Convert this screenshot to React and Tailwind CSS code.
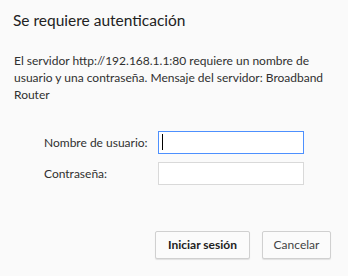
export default function App() {
  return (
    <div className="w-[348px] h-[276px] bg-[#fafafa] text-[#303030] flex flex-col" style={{ fontFamily: 'Lato, sans-serif' }}>
      <div className="pl-[13px] pt-[10px] text-[15.5px] leading-[20px] text-[#222]">Se requiere autenticación</div>
      <div className="pl-[14px] pr-[14px] pt-[22px] text-[12px] leading-[17px]">
        El servidor http://192.168.1.1:80 requiere un nombre de usuario y una contraseña. Mensaje del servidor: Broadband Router
      </div>
      <div className="mt-[28px] flex flex-col gap-[8px]">
        <div className="flex items-center">
          <label className="w-[158px] pl-[44px] text-[12px] whitespace-nowrap">Nombre de usuario:</label>
          <div className="w-[146px] h-[23px] border border-[#4d90fe] bg-white relative">
            <div className="absolute left-[3px] top-[2px] w-px h-[16px] bg-black"></div>
          </div>
        </div>
        <div className="flex items-center">
          <label className="w-[158px] pl-[44px] text-[12px] whitespace-nowrap">Contraseña:</label>
          <div className="w-[146px] h-[23px] border border-[#d9d9d9] bg-white"></div>
        </div>
      </div>
      <div className="mt-auto mb-[17px] pr-[17px] flex justify-end gap-[12px]">
        <button className="w-[95px] h-[28px] border border-[#d0d0d0] rounded-[2px] bg-[#fbfbfb] shadow-[0_1px_1px_rgba(0,0,0,0.1)] text-[12px] font-bold text-[#222]">Iniciar sesión</button>
        <button className="w-[69px] h-[28px] border border-[#d0d0d0] rounded-[2px] bg-[#fbfbfb] shadow-[0_1px_1px_rgba(0,0,0,0.1)] text-[12px] text-[#444]">Cancelar</button>
      </div>
    </div>
  );
}
